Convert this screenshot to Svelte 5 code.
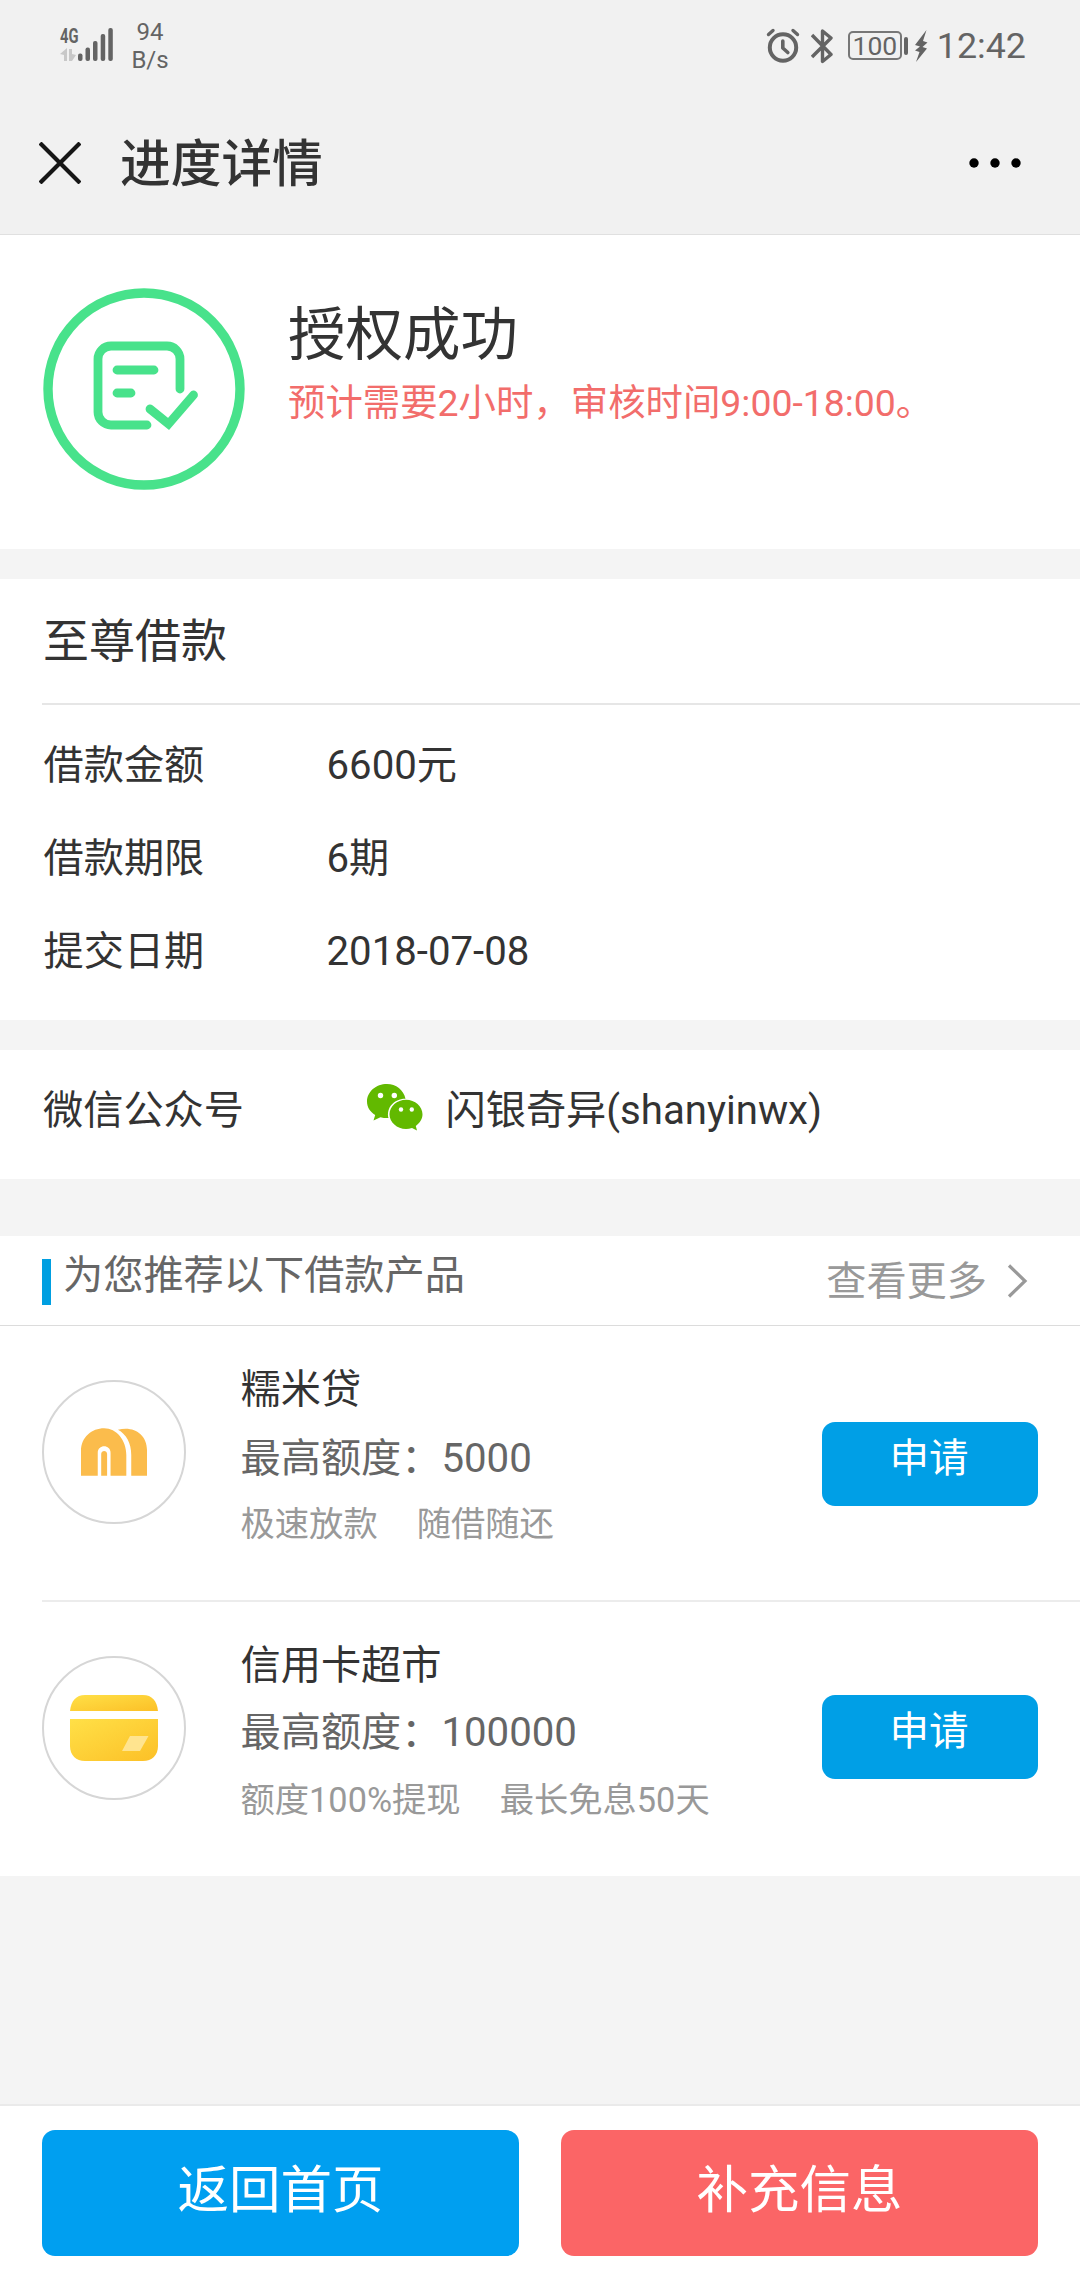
<script lang="ts">
  const details = [
    { label: '借款金额', value: '6600元' },
    { label: '借款期限', value: '6期' },
    { label: '提交日期', value: '2018-07-08' }
  ];

  const products = [
    { id: 'nuomi', name: '糯米贷', quota: '5000', tags: ['极速放款', '随借随还'] },
    { id: 'card', name: '信用卡超市', quota: '100000', tags: ['额度100%提现', '最长免息50天'] }
  ];
</script>

<div class="page">
  <header>
    <div class="status-bar">
      <svg class="signal" width="56" height="40" viewBox="0 0 56 40">
        <text x="1" y="18" textLength="18.500" lengthAdjust="spacingAndGlyphs">4G</text>
        <path d="M1 29l7-6v13H5v-6zM10 24h3v5l4 1-4 6h-3z" fill="#c8c8c8" />
        <g fill="#646464">
          <rect x="19" y="28.500" width="4.500" height="7.500" rx="2" />
          <rect x="26.500" y="22.500" width="4.500" height="13.500" rx="2" />
          <rect x="34" y="16" width="4.500" height="20" rx="2" />
          <rect x="41.700" y="9" width="4.500" height="27" rx="2" />
          <rect x="49.300" y="3" width="4.500" height="33" rx="2" />
        </g>
      </svg>
      <div class="speed">
        <span>94</span>
        <span>B/s</span>
      </div>
      <div class="status-right">
        <svg width="34" height="36" viewBox="0 0 34 36" fill="none" stroke="#646464" stroke-linecap="round">
          <circle cx="17" cy="19.500" r="13.200" stroke-width="4" />
          <path d="M16.800 13v7l5 4.500" stroke-width="3.600" stroke-linejoin="round" />
          <path d="M2.500 6.500l4.500-4M31.500 6.500l-4.500-4" stroke-width="3.400" />
        </svg>
        <svg class="bluetooth" width="22" height="36" viewBox="0 0 22 36" fill="none" stroke="#646464" stroke-width="3.400">
          <path d="M1 7l19 19.500-8.500 7V3l8.500 7L1 29" stroke-linejoin="round" />
        </svg>
        <span class="battery">100</span>
        <i class="battery-tip"></i>
        <svg class="bolt" width="16" height="34" viewBox="0 0 16 34" fill="#646464">
          <path d="M13.500 1L2 16l5 1.500-5 4 4.500 1.500L3 33l11-13.500-4.500-1.500 5-4.500-4.500-1.500z" />
        </svg>
        <span class="time">12:42</span>
      </div>
    </div>
    <div class="nav-bar">
      <svg width="42" height="42" viewBox="0 0 42 42" stroke="#161616" stroke-width="4.200">
        <path d="M1 1l40 40M41 1L1 41" />
      </svg>
      <h1>进度详情</h1>
      <svg class="more" width="52" height="10" viewBox="0 0 52 10">
        <circle cx="5" cy="5" r="4.700" />
        <circle cx="26" cy="5" r="4.700" />
        <circle cx="47" cy="5" r="4.700" />
      </svg>
    </div>
  </header>

  <section class="result">
    <svg width="202" height="202" viewBox="0 0 202 202" fill="none" stroke="#48e28b" stroke-width="8.800">
      <circle cx="101" cy="101" r="96" stroke-width="9.400" />
      <path d="M104 137H68a13 13 0 0 1-13-13V71a13 13 0 0 1 13-13h56a13 13 0 0 1 13 13v30" stroke-linecap="round" />
      <path d="M74 82h37M74 105h14M107 121l18.500 15 25-29" stroke-linecap="round" />
    </svg>
    <div class="result-text">
      <h2>授权成功</h2>
      <p>预计需要2小时，审核时间9:00-18:00。</p>
    </div>
  </section>

  <section class="loan">
    <h3>至尊借款</h3>
    <dl>
      {#each details as item}
        <div class="detail">
          <dt>{item.label}</dt>
          <dd>{item.value}</dd>
        </div>
      {/each}
    </dl>
  </section>

  <section class="wechat">
    <span class="wechat-label">微信公众号</span>
    <svg width="56" height="47" viewBox="0 0 56 47" fill="#62b900">
      <path d="M20 0C9 0 0 7.800 0 17.500c0 5.700 3 10.300 8.200 13.500L6.500 36.500l7-3.300c2.500.7 5 1 8 .9C19 24 27 14.500 38.500 14.700 36.500 6 29 0 20 0z" />
      <path d="M55.500 30.300c0-8-7.500-14.600-16.500-14.600s-16.500 6.600-16.500 14.600S30 45 39 45c2 0 4-.3 6-.9l5 2.500-1.200-4.600c4-2.800 6.700-7 6.700-11.700z" />
      <g fill="#fff">
        <circle cx="13.500" cy="11.500" r="2.700" />
        <circle cx="27.300" cy="11.500" r="2.700" />
        <circle cx="34" cy="25.500" r="2.200" />
        <circle cx="44.800" cy="25.500" r="2.200" />
      </g>
    </svg>
    <span>闪银奇异(shanyinwx)</span>
  </section>

  <section class="recommend">
    <div class="recommend-head">
      <i class="mark"></i>
      <span class="recommend-title">为您推荐以下借款产品</span>
      <a class="see-more" href="#more">
        查看更多
        <svg width="22" height="34" viewBox="0 0 22 34" fill="none" stroke="#999" stroke-width="3.200">
          <path d="M3 1.500L19 17 3 32.500" />
        </svg>
      </a>
    </div>
    {#each products as product}
      <div class="product {product.id}">
        <div class="logo">
          {#if product.id === 'nuomi'}
            <svg width="66" height="48" viewBox="0 0 67 48">
              <path d="M0 48V23C0 9 11 0 23.500 0S46 12 46 27v21H30V25c0-9-13-9-13 0v23z" fill="#fbbc4c" />
              <path d="M20.500 48V26c0-4 6-4 6 0v22z" fill="#fbbc4c" />
              <path d="M37.500 1.500C53-3 67 6 67 22v26H51V27C51 15 46 6 37.500 1.500z" fill="#fbbc4c" />
            </svg>
          {:else}
            <svg width="88" height="66" viewBox="0 0 88 66">
              <defs>
                <linearGradient id="gold" x1="0" y1="0" x2="1" y2="1">
                  <stop offset="0" stop-color="#ffe047" />
                  <stop offset="1" stop-color="#fcc027" />
                </linearGradient>
              </defs>
              <path d="M0 16C1 6 6 0 15 0h58c9 0 14 6 15 16z" fill="url(#gold)" />
              <path d="M0 24h88v27c0 9-6 15-15 15H15C6 66 0 60 0 51z" fill="url(#gold)" />
              <path d="M60 41h18.500L70 56H52z" fill="#ffe48f" />
            </svg>
          {/if}
        </div>
        <div class="info">
          <div class="name">{product.name}</div>
          <div class="quota">最高额度：{product.quota}</div>
          <div class="tags">
            {#each product.tags as tag}
              <span>{tag}</span>
            {/each}
          </div>
        </div>
        <button class="apply">申请</button>
      </div>
    {/each}
  </section>

  <footer>
    <button class="home">返回首页</button>
    <button class="supplement">补充信息</button>
  </footer>
</div>

<style>
  :global(body) {
    background: #f4f4f4;
  }
  .page {
    width: 1080px;
    height: 2280px;
    display: flex;
    flex-direction: column;
    overflow: hidden;
    background: #f4f4f4;
    color: #333;
    font-family: Roboto, 'Noto Sans CJK SC', sans-serif;
    font-size: 40.2px;
  }
  h1, h2, h3, p, dl, dd {
    margin: 0;
    font-weight: 400;
  }
  svg {
    display: block;
    flex-shrink: 0;
  }
  section {
    background: #fff;
  }
  button {
    border: none;
    padding: 0;
    border-radius: 13px;
    color: #fff;
    font-family: inherit;
    cursor: pointer;
  }

  header {
    height: 234px;
    background: #f1f1f1;
    border-bottom: 1px solid #e0e0e0;
  }
  .status-bar {
    display: flex;
    height: 92px;
    padding: 0 54px 0 59px;
    color: #646464;
  }
  .signal {
    margin-top: 25px;
  }
  .signal text {
    font-size: 21px;
    font-weight: 700;
    fill: #646464;
  }
  .speed {
    display: flex;
    flex-direction: column;
    align-items: center;
    width: 40px;
    margin: 17.5px 0 0 15px;
    font-size: 24px;
    line-height: 28px;
  }
  .status-right {
    display: flex;
    align-items: center;
    margin-left: auto;
    height: 91px;
  }
  .bluetooth {
    margin-left: 11px;
  }
  .battery {
    box-sizing: border-box;
    width: 54px;
    height: 29px;
    margin-left: 15px;
    border: 2px solid #777;
    border-radius: 5px;
    text-align: center;
    font-size: 26.5px;
    line-height: 26px;
  }
  .battery-tip {
    width: 4px;
    height: 18px;
    margin-left: 2px;
    border-radius: 2px;
    background: #646464;
  }
  .bolt {
    margin-left: 5px;
  }
  .time {
    margin-left: 8px;
    font-size: 35.8px;
    line-height: 46px;
  }
  .nav-bar {
    display: flex;
    align-items: center;
    height: 142px;
    padding: 0 59px 0 39px;
  }
  .nav-bar h1 {
    margin-left: 39px;
    padding-top: 4px;
    font-size: 50.7px;
    line-height: 64px;
    font-weight: 500;
  }
  .more {
    margin-left: auto;
  }

  .result {
    display: flex;
    height: 314px;
    box-sizing: border-box;
    padding: 53px 0 0 43px;
  }
  .result-text {
    margin: 11px 0 0 43px;
  }
  .result-text h2 {
    font-size: 57.5px;
    line-height: 74px;
  }
  .result-text p {
    color: #f26d6b;
    font-size: 37.4px;
    line-height: 61px;
  }

  .loan {
    margin-top: 30px;
    height: 441px;
  }
  .loan h3 {
    height: 124px;
    margin-left: 42px;
    padding-left: 1px;
    border-bottom: 2px solid #e6e6e6;
    font-size: 46px;
    line-height: 124px;
  }
  .loan dl {
    padding: 14px 0 0 43.5px;
  }
  .detail {
    display: flex;
    line-height: 93px;
  }
  .detail dt {
    width: 283px;
  }

  .wechat {
    display: flex;
    height: 129px;
    margin-top: 30px;
    padding-left: 43px;
    line-height: 122px;
  }
  .wechat-label {
    width: 323.5px;
  }
  .wechat svg {
    margin: 34px 23px 0 0;
  }

  .recommend {
    height: 640px;
    margin-top: 57px;
  }
  .recommend-head {
    display: flex;
    height: 89px;
    padding: 0 52px 0 42px;
    border-bottom: 1px solid #dcdcdc;
  }
  .mark {
    width: 9px;
    height: 46px;
    margin-top: 23px;
    background: #009fe1;
  }
  .recommend-title {
    margin-left: 12px;
    color: #666;
    line-height: 79px;
  }
  .see-more {
    display: flex;
    margin-left: auto;
    color: #999;
    line-height: 91px;
    text-decoration: none;
  }
  .see-more svg {
    margin: 28px 0 0 19px;
  }
  .product {
    display: flex;
    height: 274px;
    margin-left: 42px;
    padding-right: 42px;
  }
  .product + .product {
    border-top: 2px solid #ececec;
  }
  .logo {
    display: flex;
    align-items: center;
    justify-content: center;
    box-sizing: border-box;
    width: 144px;
    height: 144px;
    margin-top: 54px;
    border: 2px solid #d6d6d6;
    border-radius: 50%;
  }
  .info {
    margin: 30px 0 0 54.5px;
  }
  .name {
    line-height: 68px;
  }
  .quota {
    color: #666;
    line-height: 69px;
  }
  .tags {
    display: flex;
    gap: 39px;
    color: #999;
    font-size: 34.3px;
    line-height: 62px;
  }
  .apply {
    width: 216px;
    height: 84px;
    margin: 96px 0 0 auto;
    padding-bottom: 20px;
    padding-right: 2px;
    background: #009fe6;
    font-size: 39.5px;
  }
  .card .quota {
    line-height: 66px;
  }
  .card .tags {
    line-height: 69px;
  }
  .card .apply {
    margin-top: 93px;
  }

  footer {
    display: flex;
    gap: 42px;
    box-sizing: border-box;
    height: 176px;
    margin-top: auto;
    padding: 24px 42px;
    border-top: 2px solid #eaeaea;
    background: #fff;
  }
  footer button {
    flex: 1;
    height: 126px;
    padding-bottom: 15px;
    font-size: 51.5px;
  }
  .home {
    background: #009ff0;
  }
  .supplement {
    background: #fb6566;
  }
</style>
